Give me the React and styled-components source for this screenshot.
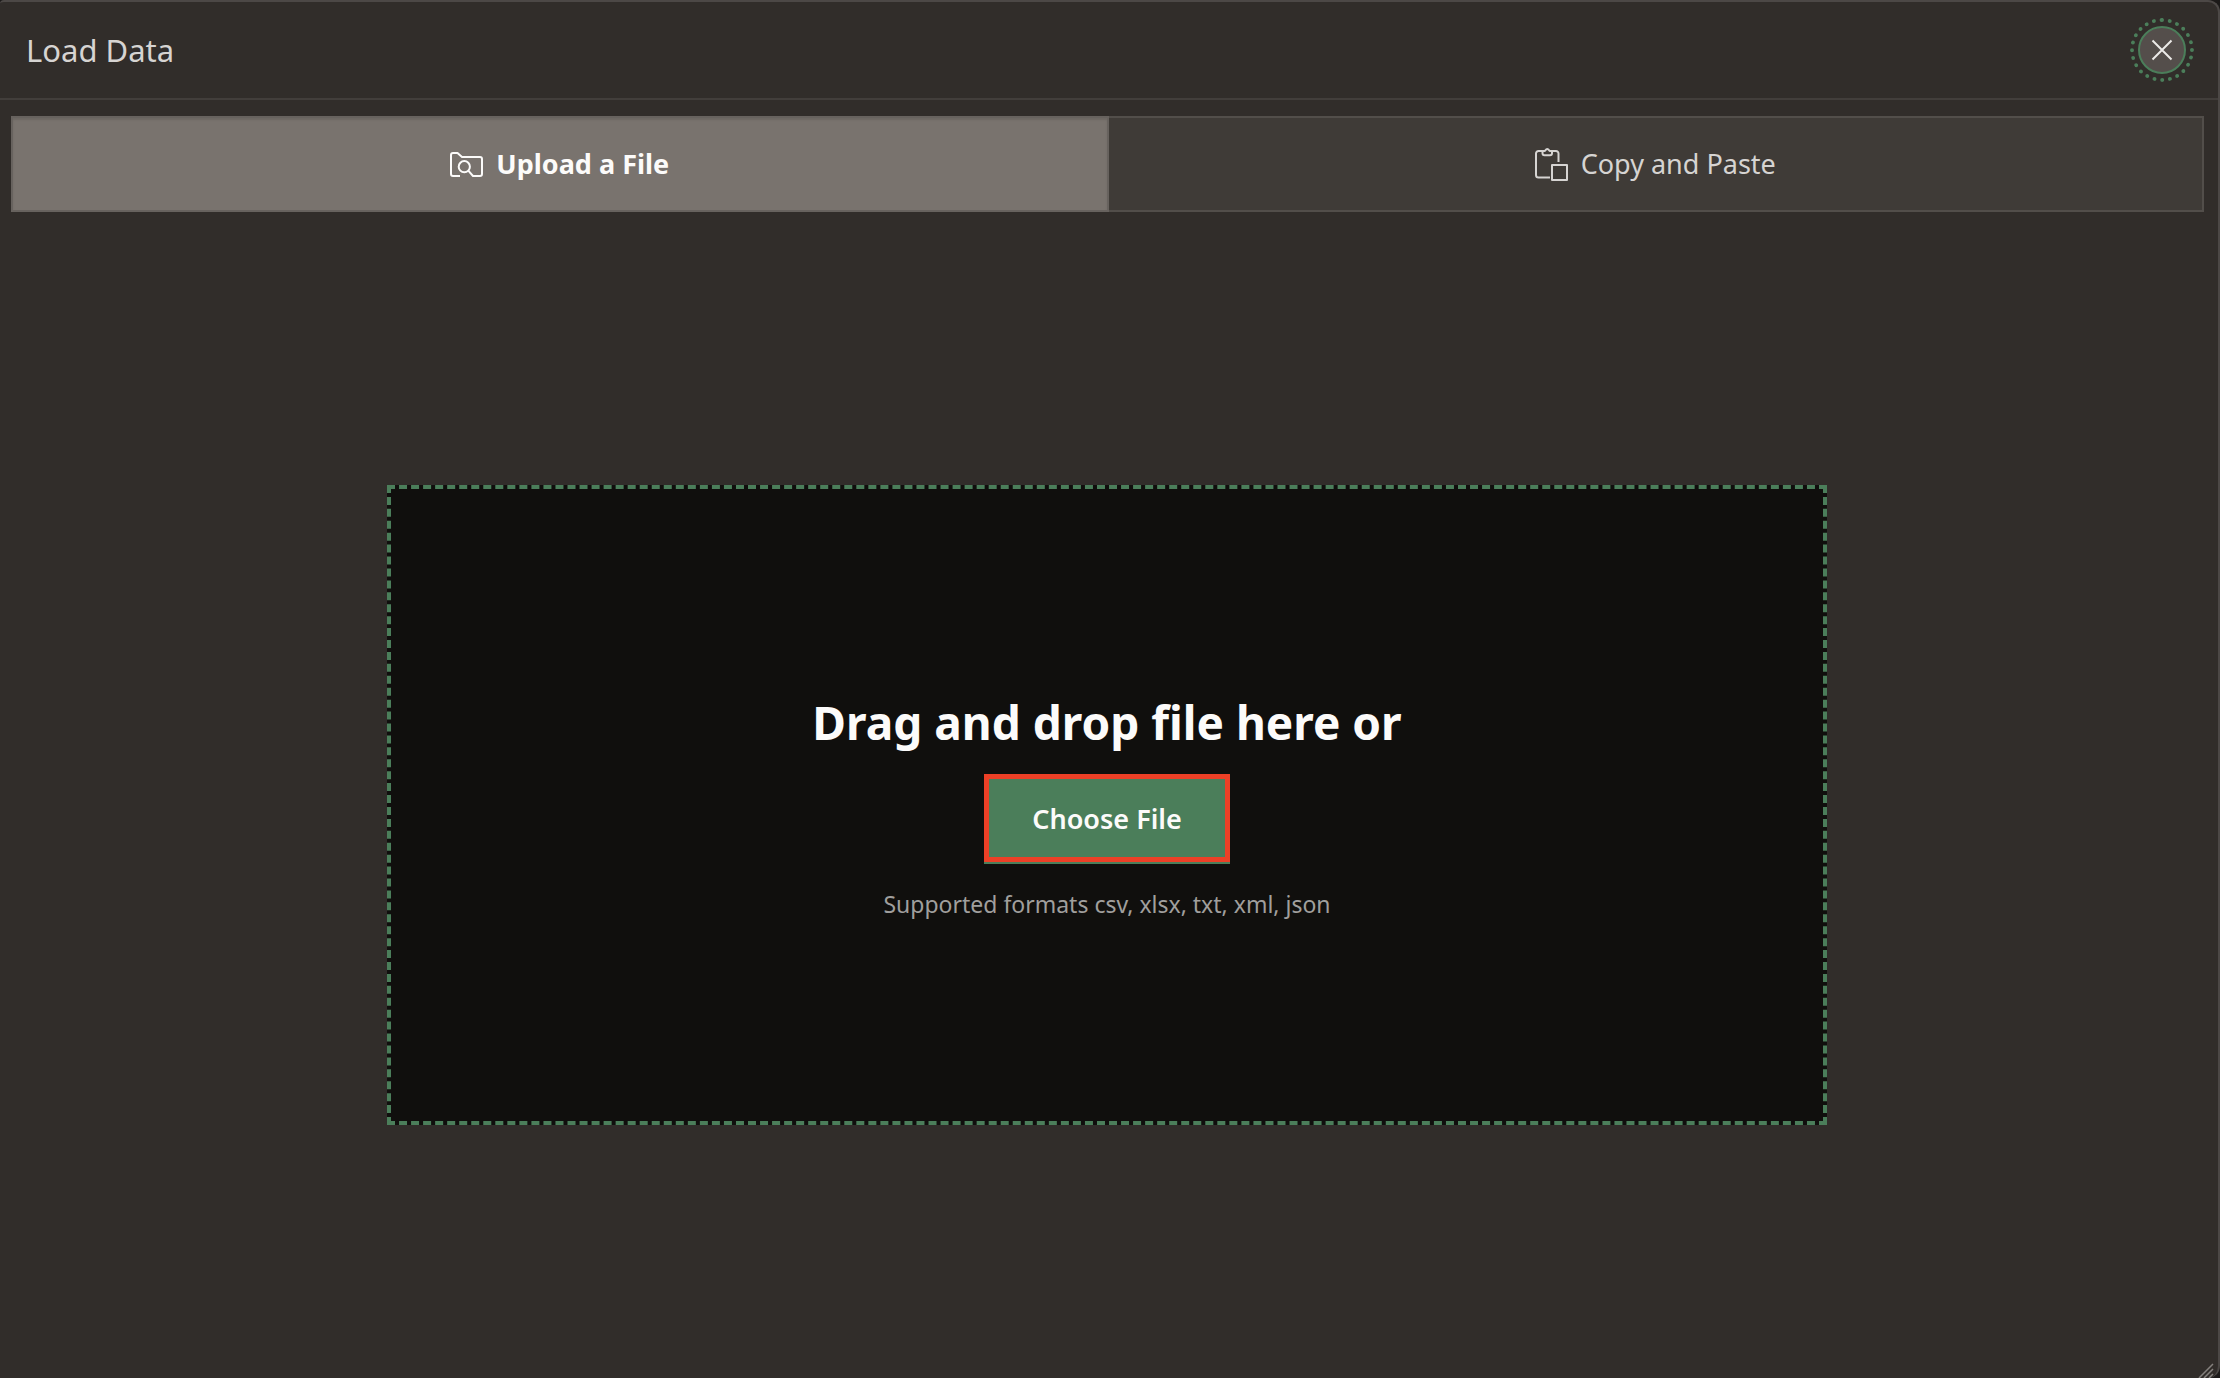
import React, { useState } from 'react';
import styled, { createGlobalStyle } from 'styled-components';

const color = {
  surface: '#312d2a',
  edge: '#4c4846',
  rule: '#423e3b',
  text: '#d6d4d2',
  bright: '#fcfbfa',
  muted: '#a09f9d',
  green: '#4b7e5a',
  red: '#ec4026',
  drop: '#100f0d',
};

const GlobalStyle = createGlobalStyle`
  *, *::before, *::after { box-sizing: border-box; }
  body {
    margin: 0;
    background: #1c1a19;
    font-family: "Noto Sans", "Open Sans", sans-serif;
    color: ${color.text};
  }
  button { font-family: inherit; cursor: pointer; }
`;

const Dialog = styled.div`
  position: relative;
  display: flex;
  flex-direction: column;
  min-height: 100vh;
  background: ${color.surface};
  border-top: 2px solid ${color.edge};
  border-right: 2px solid ${color.edge};
  border-radius: 4px 12px 12px 0;
`;

const Header = styled.header`
  display: flex;
  align-items: center;
  justify-content: space-between;
  height: 98px;
  padding: 0 32px 0 26px;
  border-bottom: 2px solid ${color.rule};
`;

const Title = styled.h1`
  margin: 0;
  font-size: 31px;
  line-height: 40px;
  font-weight: 400;
`;

const CloseButton = styled.button`
  display: flex;
  align-items: center;
  justify-content: center;
  width: 48px;
  height: 48px;
  padding: 0;
  color: #eceae8;
  background: #544e4b;
  border: 2px solid ${color.green};
  border-radius: 50%;
  outline: 4px dotted ${color.green};
  outline-offset: 4px;
`;

const Tabs = styled.div`
  display: flex;
  margin: 16px 14px 0 11px;
`;

const Tab = styled.button`
  display: flex;
  flex: 1;
  align-items: center;
  justify-content: center;
  gap: 12px;
  height: 96px;
  padding: 0;
  font-size: 27px;
  line-height: 36px;
  font-weight: ${(p) => (p.$active ? 700 : 400)};
  color: ${(p) => (p.$active ? color.bright : color.text)};
  background: ${(p) => (p.$active ? '#79736e' : '#3f3b37')};
  border: 2px solid ${(p) => (p.$active ? '#67625e' : '#524e4a')};
  box-shadow: ${(p) => (p.$active ? 'inset 0 2px 2px rgba(0, 0, 0, 0.1)' : 'none')};
  position: relative;
  z-index: ${(p) => (p.$active ? 1 : 0)};

  & + & { margin-left: -2px; }
`;

const Main = styled.main`
  display: flex;
  flex: 1;
  align-items: center;
  justify-content: center;
  padding: 20px 16px 0 12px;
`;

const DropZone = styled.section`
  display: flex;
  flex-direction: column;
  align-items: center;
  justify-content: center;
  width: 100%;
  max-width: 1440px;
  min-height: 640px;
  background: ${color.drop};
  border: 4px dashed ${color.green};
`;

const DropHeading = styled.h2`
  margin: 0 0 20px;
  font-size: 46px;
  line-height: 64px;
  font-weight: 700;
  color: ${color.bright};
`;

const ChooseButton = styled.button`
  min-width: 246px;
  height: 88px;
  padding: 2px 40px 0;
  font-size: 27px;
  line-height: 36px;
  font-weight: 600;
  color: ${color.bright};
  background: ${color.green};
  border: 5px solid ${color.red};
  box-shadow: 0 2px 0 ${color.green};
`;

const Formats = styled.p`
  margin: 26px 0 0;
  font-size: 23px;
  line-height: 32px;
  color: ${color.muted};
`;

const ResizeGrip = styled.svg`
  position: absolute;
  right: 4px;
  bottom: 0;
  color: #85817e;
  cursor: nwse-resize;
`;

const Stroke = { fill: 'none', stroke: 'currentColor', strokeWidth: 2, strokeLinejoin: 'round' };

const CloseIcon = () => (
  <svg width="22" height="22" viewBox="0 0 22 22" aria-hidden="true" {...Stroke}>
    <path d="M1.5 1.5 20.5 20.5M20.5 1.5 1.5 20.5" />
  </svg>
);

const FolderSearchIcon = () => (
  <svg width="34" height="34" viewBox="0 0 34 34" aria-hidden="true" {...Stroke}>
    <path d="M10 29H3a2 2 0 0 1-2-2V8a2 2 0 0 1 2-2h4.500L12 10h18a2 2 0 0 1 2 2v15a2 2 0 0 1-2 2h-7L18.300 23.700" />
    <circle cx="14.300" cy="19.700" r="5.600" />
  </svg>
);

const ClipboardIcon = () => (
  <svg width="34" height="34" viewBox="0 0 34 34" aria-hidden="true" {...Stroke}>
    <path d="M15 30.500H3.500a2.500 2.500 0 0 1-2.500-2.500V6.500a2.500 2.500 0 0 1 2.500-2.500H7.500M17 4h4a2.500 2.500 0 0 1 2.500 2.500V15" />
    <path d="M7.500 4H9.500C10.500 4 10.500 2 12.250 2S14 4 15 4h2v2.300a2 2 0 0 1-2 2H9.500a2 2 0 0 1-2-2Z" />
    <path d="M17 18h15v15H17Z" />
  </svg>
);

const tabs = [
  { id: 'upload', label: 'Upload a File', Icon: FolderSearchIcon },
  { id: 'paste', label: 'Copy and Paste', Icon: ClipboardIcon },
];

export default function App() {
  const [active, setActive] = useState('upload');

  return (
    <>
      <GlobalStyle />
      <Dialog role="dialog" aria-labelledby="dialog-title">
        <Header>
          <Title id="dialog-title">Load Data</Title>
          <CloseButton type="button" aria-label="Close">
            <CloseIcon />
          </CloseButton>
        </Header>
        <Tabs role="tablist">
          {tabs.map(({ id, label, Icon }) => (
            <Tab
              key={id}
              type="button"
              role="tab"
              aria-selected={active === id}
              $active={active === id}
              onClick={() => setActive(id)}
            >
              <Icon />
              <span>{label}</span>
            </Tab>
          ))}
        </Tabs>
        <Main>
          <DropZone>
            <DropHeading>Drag and drop file here or</DropHeading>
            <ChooseButton type="button">Choose File</ChooseButton>
            <Formats>Supported formats csv, xlsx, txt, xml, json</Formats>
          </DropZone>
        </Main>
        <ResizeGrip width="16" height="16" viewBox="0 0 16 16" aria-hidden="true">
          <path d="M1 16 15 2M6 16 15 7M11 16 15 12" fill="none" stroke="currentColor" strokeWidth="1.500" />
        </ResizeGrip>
      </Dialog>
    </>
  );
}
